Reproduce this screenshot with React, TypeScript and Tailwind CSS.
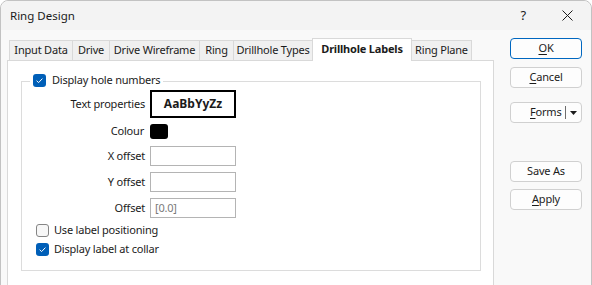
import React from "react"

function Check({ checked }: { checked: boolean }) {
  if (checked) {
    return (
      <span className="flex h-[13px] w-[13px] shrink-0 items-center justify-center rounded-[3px] bg-[#005fb8]">
        <svg width="9" height="9" viewBox="0 0 9 9">
          <path d="M1.6 4.7 L3.6 6.6 L7.4 2.6" fill="none" stroke="#ffffff" strokeWidth="1" />
        </svg>
      </span>
    )
  }
  return <span className="h-[13px] w-[13px] shrink-0 rounded-[3px] border border-[#858585] bg-[#f7f7f7]" />
}

const tabs = [
  { name: "Input Data", w: "w-[63px]" },
  { name: "Drive", w: "w-[37px]" },
  { name: "Drive Wireframe", w: "w-[90px]" },
  { name: "Ring", w: "w-[34px]" },
  { name: "Drillhole Types", w: "w-[79px]" },
]

const Btn = ({ children, className = "" }: { children: React.ReactNode; className?: string }) => (
  <div
    className={`flex h-[21px] w-[72px] items-center justify-center rounded-[4px] border bg-[#fdfdfd] text-[#1b1b1b] ${className}`}
  >
    {children}
  </div>
)

const Field = ({ label, value }: { label: string; value?: string }) => (
  <div className="flex h-[20px] items-center">
    <div className="w-[128px] pr-[5px] text-right">{label}</div>
    <div className="flex h-[20px] w-[86px] items-center border border-[#b4b4b4] bg-white pl-[4px] text-[#7a7a7a]">
      {value}
    </div>
  </div>
)

export default function App() {
  return (
    <div className="h-[285px] w-[592px] overflow-hidden bg-white font-['Noto_Sans',sans-serif] text-[11px] tracking-[-0.2px] whitespace-nowrap text-[#1b1b1b]">
      <div className="flex h-[300px] flex-col rounded-t-[8px] border border-[#c2c2c2] bg-[#f9f9f9]">
        {/* title bar */}
        <div className="flex h-[29px] shrink-0 items-center rounded-t-[8px] bg-[#f3f3f3] pl-[9px]">
          <span className="text-[11.5px] tracking-normal">Ring Design</span>
          <span className="ml-auto mr-[36px] text-[13px] leading-none">?</span>
          <svg width="11" height="11" viewBox="0 0 11 11" className="mr-[18px]">
            <path d="M0.5 0.5 L10.5 10.5 M10.5 0.5 L0.5 10.5" stroke="#1b1b1b" strokeWidth="1" />
          </svg>
        </div>

        <div className="flex flex-1 pl-[6px] pt-[8px]">
          {/* tabs + page */}
          <div className="flex w-[487px] flex-col">
            <div className="flex h-[22px] items-end pl-[2px]">
              {tabs.map((t) => (
                <div
                  key={t.name}
                  className={`flex h-[20px] ${t.w} items-center justify-center border-l border-t border-[#d9d9d9] bg-[#f0f0f0]`}
                >
                  {t.name}
                </div>
              ))}
              <div className="relative z-10 -mb-px flex h-[23px] w-[100px] items-center justify-center border-x border-t border-[#d9d9d9] bg-white pb-[2px] font-bold">
                Drillhole Labels
              </div>
              <div className="flex h-[20px] w-[60px] items-center justify-center border-r border-t border-[#d9d9d9] bg-[#f0f0f0]">
                Ring Plane
              </div>
            </div>

            <div className="flex-1 border border-[#d9d9d9] bg-white pl-[13px] pt-[20px]">
              {/* group box */}
              <div className="relative h-[190px] w-[460px] border border-[#dcdcdc]">
                <div className="absolute left-[8px] top-[-10px] flex h-[16px] items-center gap-[6px] bg-white px-[3px]">
                  <Check checked />
                  <span>Display hole numbers</span>
                </div>

                <div className="flex flex-col pt-[8px]">
                  <div className="flex h-[28px] items-center">
                    <div className="w-[128px] pr-[5px] text-right">Text properties</div>
                    <div className="flex h-[28px] w-[86px] items-center justify-center border-2 border-black text-[12px] font-bold tracking-normal">
                      AaBbYyZz
                    </div>
                  </div>
                  <div className="mt-[6px] flex h-[15px] items-center">
                    <div className="w-[128px] pr-[6px] text-right">Colour</div>
                    <div className="h-[15px] w-[18px] rounded-[3px] bg-black" />
                  </div>
                  <div className="mt-[7px]">
                    <Field label="X offset" />
                  </div>
                  <div className="mt-[6px]">
                    <Field label="Y offset" />
                  </div>
                  <div className="mt-[6px]">
                    <Field label="Offset" value="[0.0]" />
                  </div>
                  <div className="mt-[6px] flex h-[13px] items-center gap-[5px] pl-[14px]">
                    <Check checked={false} />
                    <span>Use label positioning</span>
                  </div>
                  <div className="mt-[6px] flex h-[13px] items-center gap-[5px] pl-[14px]">
                    <Check checked />
                    <span>Display label at collar</span>
                  </div>
                </div>
              </div>
            </div>
          </div>

          {/* buttons */}
          <div className="ml-[16px] flex flex-col">
            <Btn className="border-[#0067c0]">
              <span className="underline underline-offset-2">O</span>K
            </Btn>
            <Btn className="mt-[8px] border-[#d0d0d0]">
              <span className="underline underline-offset-2">C</span>ancel
            </Btn>
            <div className="mt-[14px] flex h-[21px] w-[72px] items-center rounded-[4px] border border-[#d0d0d0] bg-[#fdfdfd]">
              <div className="flex-1 pl-[19px]">
                <span className="underline underline-offset-2">F</span>orms
              </div>
              <div className="h-[13px] w-px bg-[#6d6d6d]" />
              <svg width="15" height="8" viewBox="0 0 15 8">
                <path d="M4 2 L11 2 L7.5 6 Z" fill="#1b1b1b" />
              </svg>
            </div>
            <Btn className="mt-[38px] border-[#d0d0d0]">Save As</Btn>
            <Btn className="mt-[7px] border-[#d0d0d0]">
              <span className="underline underline-offset-2">A</span>pply
            </Btn>
          </div>
        </div>
      </div>
    </div>
  )
}
